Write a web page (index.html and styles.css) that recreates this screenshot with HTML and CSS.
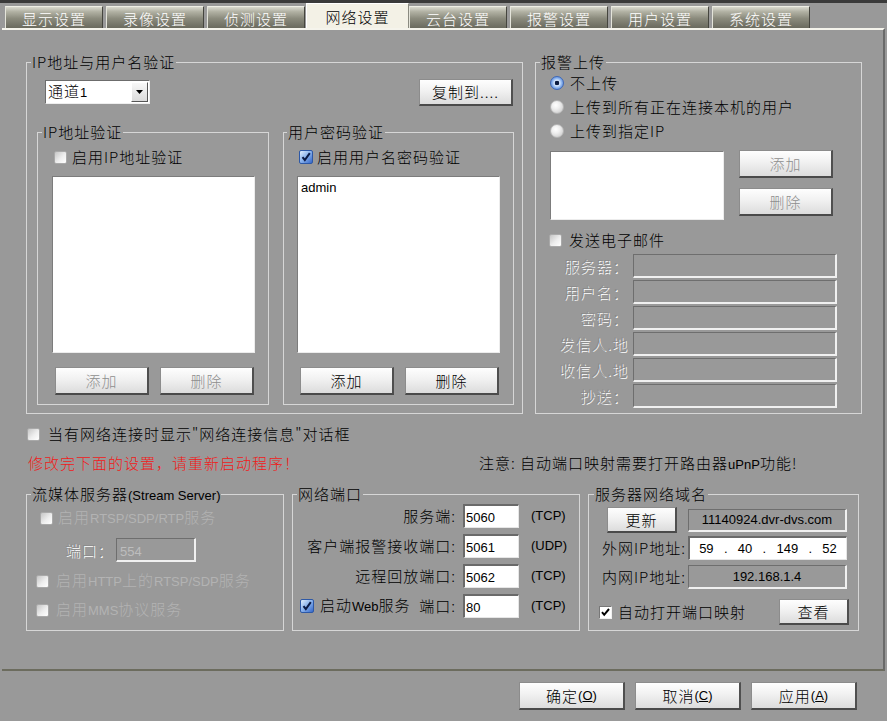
FILE: index.html
```html
<!DOCTYPE html>
<html lang="zh-CN">
<head>
<meta charset="utf-8">
<title>网络设置</title>
<link rel="stylesheet" href="styles.css">
</head>
<body>
<div class="topbar"></div>
<div class="tabs">
  <div class="tab">显示设置</div>
  <div class="tab">录像设置</div>
  <div class="tab">侦测设置</div>
  <div class="tab tab-active">网络设置</div>
  <div class="tab">云台设置</div>
  <div class="tab">报警设置</div>
  <div class="tab">用户设置</div>
  <div class="tab">系统设置</div>
</div>

<div class="panel">
  <div class="row1">
    <div class="group g-auth">
      <div class="gtitle">IP地址与用户名验证</div>
      <div class="auth-top">
        <div class="select">
          <span>通道<span class="en">1</span></span>
          <span class="select-btn"><svg width="7" height="4" viewBox="0 0 7 4"><path d="M0 0h7L3.5 4z" fill="#000"/></svg></span>
        </div>
        <div class="btn btn-copy">复制到....</div>
      </div>
      <div class="auth-subs">
        <div class="group g-ip">
          <div class="gtitle">IP地址验证</div>
          <div class="chk-row"><span class="chk"></span><span>启用IP地址验证</span></div>
          <div class="list"></div>
          <div class="btn-row">
            <div class="btn btn-sm disabled">添加</div>
            <div class="btn btn-sm disabled">删除</div>
          </div>
        </div>
        <div class="group g-user">
          <div class="gtitle">用户密码验证</div>
          <div class="chk-row"><span class="chk-on"><svg width="10" height="10" viewBox="0 0 10 10"><path d="M1.5 5.2l2.3 2.8L8.8 1.2" fill="none" stroke="#0b1a44" stroke-width="2"/></svg></span><span>启用用户名密码验证</span></div>
          <div class="list"><span class="en">admin</span></div>
          <div class="btn-row">
            <div class="btn btn-sm">添加</div>
            <div class="btn btn-sm">删除</div>
          </div>
        </div>
      </div>
    </div>

    <div class="group g-alarm">
      <div class="gtitle">报警上传</div>
      <div class="radio-row first"><span class="radio radio-on"></span><span>不上传</span></div>
      <div class="radio-row"><span class="radio"></span><span>上传到所有正在连接本机的用户</span></div>
      <div class="radio-row"><span class="radio"></span><span>上传到指定IP</span></div>
      <div class="alarm-mid">
        <div class="list alarm-list"></div>
        <div class="alarm-btns">
          <div class="btn btn-sm disabled">添加</div>
          <div class="btn btn-sm disabled">删除</div>
        </div>
      </div>
      <div class="chk-row email-row"><span class="chk"></span><span>发送电子邮件</span></div>
      <div class="email-grid">
        <div class="elabel">服务器：</div><div class="field-dis"></div>
        <div class="elabel">用户名：</div><div class="field-dis"></div>
        <div class="elabel">密码：</div><div class="field-dis"></div>
        <div class="elabel">发信人.地</div><div class="field-dis"></div>
        <div class="elabel">收信人.地</div><div class="field-dis"></div>
        <div class="elabel">抄送：</div><div class="field-dis"></div>
      </div>
    </div>
  </div>

  <div class="row-check"><span class="chk"></span><span>当有网络连接时显示"网络连接信息"对话框</span></div>
  <div class="row-notice">
    <span class="red">修改完下面的设置，请重新启动程序！</span>
    <span>注意: 自动端口映射需要打开路由器<span class="en">uPnP</span>功能!</span>
  </div>

  <div class="row3">
    <div class="group g-stream">
      <div class="gtitle">流媒体服务器<span class="en">(Stream Server)</span></div>
      <div class="chk-row dis s1"><span class="chk"></span><span>启用<span class="en">RTSP/SDP/RTP</span>服务</span></div>
      <div class="port-row">
        <span class="elabel plabel-s">端口：</span>
        <span class="field-dis port-in"><span class="en">554</span></span>
      </div>
      <div class="chk-row dis s2"><span class="chk"></span><span>启用<span class="en">HTTP</span>上的<span class="en">RTSP/SDP</span>服务</span></div>
      <div class="chk-row dis s3"><span class="chk"></span><span>启用<span class="en">MMS</span>协议服务</span></div>
    </div>

    <div class="group g-ports">
      <div class="gtitle">网络端口</div>
      <div class="port-grid">
        <div class="plabel">服务端:</div><div class="in-white"><span class="en">5060</span></div><div class="unit en">(TCP)</div>
        <div class="plabel">客户端报警接收端口:</div><div class="in-white"><span class="en">5061</span></div><div class="unit en">(UDP)</div>
        <div class="plabel">远程回放端口:</div><div class="in-white"><span class="en">5062</span></div><div class="unit en">(TCP)</div>
        <div class="plabel plabel-web">
          <span class="web-chk"><span class="chk-on"><svg width="10" height="10" viewBox="0 0 10 10"><path d="M1.5 5.2l2.3 2.8L8.8 1.2" fill="none" stroke="#0b1a44" stroke-width="2"/></svg></span><span>启动<span class="en">Web</span>服务</span></span>
          <span>端口:</span>
        </div><div class="in-white"><span class="en">80</span></div><div class="unit en">(TCP)</div>
      </div>
    </div>

    <div class="group g-domain">
      <div class="gtitle">服务器网络域名</div>
      <div class="d-row d-row1">
        <div class="btn btn-upd">更新</div>
        <div class="field-dis dfield dfield1"><span class="en">11140924.dvr-dvs.com</span></div>
      </div>
      <div class="d-row d-row2">
        <div class="dlabel">外网IP地址:</div>
        <div class="in-white dfield ipfield en"><span>59</span><span>.</span><span>40</span><span>.</span><span>149</span><span>.</span><span>52</span></div>
      </div>
      <div class="d-row d-row3">
        <div class="dlabel">内网IP地址:</div>
        <div class="field-dis dfield"><span class="en">192.168.1.4</span></div>
      </div>
      <div class="d-row4">
        <span class="web-chk"><span class="chk-classic"><svg width="9" height="9" viewBox="0 0 9 9"><path d="M1 4.2l2.2 2.6L8 1" fill="none" stroke="#000" stroke-width="2"/></svg></span><span>自动打开端口映射</span></span>
        <div class="btn btn-view">查看</div>
      </div>
    </div>
  </div>
</div>

<div class="footer">
  <div class="btn btn-foot">确定<span class="en">(<u>O</u>)</span></div>
  <div class="btn btn-foot">取消<span class="en">(<u>C</u>)</span></div>
  <div class="btn btn-foot">应用<span class="en">(<u>A</u>)</span></div>
</div>
</body>
</html>
```
FILE: styles.css
```css
* { box-sizing: border-box; }

body {
  margin: 0;
  width: 887px;
  height: 721px;
  overflow: hidden;
  background: #999999;
  color: #000;
  font-family: "Noto Sans CJK SC", "Noto Sans", sans-serif;
  font-weight: 300;
  font-size: 15px;
  line-height: 16px;
  letter-spacing: 1px;
}

.en {
  font-family: "Liberation Sans", Arial, sans-serif;
  font-weight: 400;
  font-size: 13px;
  letter-spacing: 0;
}

/* ---------- tabs ---------- */
.topbar { height: 3px; background: #3a3a3a; }

.tabs {
  display: flex;
  align-items: flex-end;
  gap: 3px;
  height: 25px;
  padding-left: 5px;
}

.tab {
  width: 98px;
  height: 22px;
  padding-top: 2px;
  display: flex;
  align-items: center;
  justify-content: center;
  color: #fff;
  background: linear-gradient(#dadad0, #b2b2a4 22%, #8a8a7c 55%, #6a6a5e);
  border-top: 1px solid #efefe6;
  border-left: 1px solid #e4e4da;
  border-right: 1px solid #45453e;
  white-space: nowrap;
}

.tab-active {
  width: 103px;
  height: 25px;
  margin: 0 -3px 0 -2px;
  color: #000;
  background: #f3f1e6;
  border-top: 1px solid #ffffff;
  border-left: 1px solid #ffffff;
  border-right: 1px solid #8a8a80;
}

/* ---------- panel ---------- */
.panel {
  width: 883px;
  height: 643px;
  margin-left: 2px;
  padding-left: 24px;
  border-top: 2px solid #f5f4ec;
  border-right: 2px solid #6a6a6a;
  border-bottom: 2px solid #6c6c5e;
  display: flex;
  flex-direction: column;
}

.group { border: 1px solid #d6d6d6; }

.gtitle {
  width: max-content;
  height: 16px;
  margin: -9px 0 0 4px;
  padding: 0 1px;
  background: #999999;
  white-space: nowrap;
}

.row1 {
  display: flex;
  gap: 12px;
  margin-top: 32px;
  height: 352px;
  flex: none;
}

/* auth group */
.g-auth { width: 497px; }

.auth-top {
  display: flex;
  justify-content: space-between;
  align-items: flex-start;
  height: 27px;
  margin-top: 9px;
  padding: 0 9px 0 18px;
}

.select {
  width: 105px;
  height: 24px;
  margin-top: 1px;
  padding: 0 1px 0 2px;
  display: flex;
  align-items: center;
  justify-content: space-between;
  background: #fff;
  border-style: solid;
  border-width: 1px;
  border-color: #6c6c6c #eeeeee #eeeeee #6c6c6c;
}

.select-btn {
  width: 17px;
  height: 20px;
  display: flex;
  align-items: center;
  justify-content: center;
  background: linear-gradient(#f8f8f8, #dadada);
  border-style: solid;
  border-width: 1px;
  border-color: #ffffff #555 #555 #ffffff;
}

.btn {
  display: flex;
  align-items: center;
  justify-content: center;
  height: 28px;
  background: linear-gradient(#fefefe, #f1f1f1 45%, #dcdcdc);
  border-style: solid;
  border-width: 1px 2px 2px 1px;
  border-color: #8c8c8c #4f4f4f #4a4a4a #8c8c8c;
  white-space: nowrap;
  flex: none;
}

.btn.disabled { color: #8e8e8e; }
.btn-copy { width: 94px; height: 27px; }
.btn-sm { width: 94px; }

.auth-subs {
  display: flex;
  gap: 14px;
  margin-top: 26px;
  padding-left: 10px;
  height: 273px;
}

.g-ip { width: 232px; }
.g-user { width: 231px; }
.g-user .gtitle { margin-left: 3px; }

.chk-row {
  display: flex;
  align-items: center;
  height: 16px;
  white-space: nowrap;
}

.g-ip .chk-row { margin-top: 9px; padding-left: 16px; gap: 5px; }
.g-user .chk-row { margin-top: 9px; padding-left: 15px; gap: 4px; }

.chk {
  width: 13px;
  height: 13px;
  flex: none;
  border: 1px solid #a9a9a9;
  border-radius: 2px;
  background: linear-gradient(135deg, #c6c6c6, #eeeeee 55%, #ffffff);
}

.chk-on {
  width: 14px;
  height: 14px;
  flex: none;
  display: flex;
  align-items: center;
  justify-content: center;
  border: 1px solid #2d58a6;
  border-radius: 2px;
  background: linear-gradient(135deg, #e2eefc, #86b0ec 50%, #3466c8);
}

.chk-classic {
  width: 13px;
  height: 13px;
  flex: none;
  display: flex;
  align-items: center;
  justify-content: center;
  background: #fff;
  border-style: solid;
  border-width: 1px;
  border-color: #777 #f0f0f0 #f0f0f0 #777;
}

.list {
  background: #fff;
  border-style: solid;
  border-width: 1px;
  border-color: #7c7c7c #ececec #ececec #7c7c7c;
}

.g-ip .list { width: 203px; height: 177px; margin: 11px 0 0 14px; }
.g-user .list { width: 203px; height: 177px; margin: 11px 0 0 13px; padding: 1px 3px; }

.btn-row { display: flex; gap: 11px; margin-top: 14px; }
.g-ip .btn-row { padding-left: 17px; }
.g-user .btn-row { padding-left: 16px; }

/* alarm group */
.g-alarm { width: 327px; }

.radio-row {
  display: flex;
  align-items: center;
  gap: 6px;
  height: 16px;
  margin-top: 8px;
  padding-left: 14px;
  white-space: nowrap;
}
.radio-row.first { margin-top: 5px; }

.radio {
  width: 14px;
  height: 14px;
  flex: none;
  border-radius: 50%;
  border: 1px solid #b4b4b4;
  background: radial-gradient(circle at 40% 35%, #ffffff 0, #f0f0f0 35%, #c2c2c2 100%);
}

.radio-on {
  border-color: #3d68b8;
  background: radial-gradient(circle, #0b1b40 0, #0b1b40 2px, #d9e8fc 2.6px, #8fb6ee 55%, #3b6dc9 100%);
}

.alarm-mid {
  display: flex;
  height: 70px;
  margin-top: 11px;
  padding-left: 14px;
}

.alarm-list { width: 174px; height: 69px; margin-top: 1px; }

.alarm-btns {
  display: flex;
  flex-direction: column;
  gap: 10px;
  margin-left: 15px;
}

.g-alarm .email-row { margin-top: 12px; padding-left: 13px; gap: 7px; }

.email-grid {
  display: grid;
  grid-template-columns: 72px 204px;
  grid-auto-rows: 24px;
  column-gap: 5px;
  row-gap: 2px;
  margin: 6px 0 0 20px;
}

.elabel {
  text-align: right;
  line-height: 24px;
  white-space: nowrap;
  color: #8a8a8a;
  text-shadow: 1px 1px 0 #ffffff;
}

.field-dis {
  background: #999999;
  border-style: solid;
  border-width: 1px 2px 2px 1px;
  border-color: #6e6e6e #f0f0f0 #f0f0f0 #6e6e6e;
}

/* middle rows */
.row-check {
  display: flex;
  align-items: center;
  gap: 8px;
  height: 16px;
  margin-top: 12px;
  padding-left: 1px;
  flex: none;
}

.row-notice {
  display: grid;
  grid-template-columns: 451px auto;
  height: 16px;
  margin-top: 13px;
  padding-left: 2px;
  white-space: nowrap;
  flex: none;
}

.red { color: #f01a1a; }

.row3 {
  display: flex;
  gap: 8px;
  margin-top: 23px;
  height: 137px;
  flex: none;
}

/* stream group */
.g-stream { width: 258px; }
.dis { color: #b3b3b3; }
.g-stream .s1 { margin-top: 8px; padding-left: 13px; gap: 5px; }
.g-stream .s2 { margin-top: 11px; padding-left: 9px; gap: 7px; }
.g-stream .s3 { margin-top: 13px; padding-left: 9px; gap: 7px; }

.port-row {
  display: flex;
  align-items: center;
  height: 24px;
  margin-top: 12px;
  padding-left: 38px;
}

.plabel-s { width: 51px; text-align: left; }

.port-in {
  width: 80px;
  height: 24px;
  padding-left: 3px;
  line-height: 21px;
  color: #bdbdbd;
}

/* ports group */
.g-ports { width: 288px; }

.port-grid {
  display: grid;
  grid-template-columns: 156px 56px auto;
  grid-auto-rows: 24px;
  column-gap: 7px;
  row-gap: 6px;
  margin: 2px 0 0 7px;
}

.plabel {
  text-align: right;
  line-height: 24px;
  white-space: nowrap;
}

.plabel-web {
  display: flex;
  align-items: center;
  justify-content: space-between;
}

.web-chk { display: flex; align-items: center; gap: 6px; white-space: nowrap; }

.in-white {
  background: #fff;
  border-style: solid;
  border-width: 2px 1px 1px 2px;
  border-color: #6a6a6a #e6e6e6 #e6e6e6 #6a6a6a;
  padding-left: 1px;
  line-height: 20px;
}

.unit { padding-left: 5px; line-height: 24px; }

/* domain group */
.g-domain { width: 271px; }
.g-domain .gtitle { margin-left: 5px; }

.d-row {
  display: grid;
  grid-template-columns: 86px 159px;
  align-items: center;
  padding-left: 13px;
}

.d-row1 { height: 26px; margin-top: 5px; }
.d-row2 { height: 24px; margin-top: 3px; }
.d-row3 { height: 24px; margin-top: 5px; }

.btn-upd { width: 70px; height: 26px; margin-left: 5px; }

.dlabel { white-space: nowrap; line-height: 24px; }

.dfield {
  height: 24px;
  display: flex;
  align-items: center;
  justify-content: center;
}
.dfield1 { height: 23px; }

.ipfield {
  justify-content: space-around;
  padding: 0 4px;
}

.d-row4 {
  display: flex;
  align-items: center;
  justify-content: space-between;
  height: 26px;
  margin-top: 10px;
  padding: 0 9px 0 10px;
}

.btn-view { width: 70px; height: 26px; }

/* footer */
.footer {
  display: flex;
  justify-content: flex-end;
  gap: 10px;
  margin-top: 11px;
  padding-right: 30px;
}

.btn-foot { width: 106px; height: 28px; }
```
